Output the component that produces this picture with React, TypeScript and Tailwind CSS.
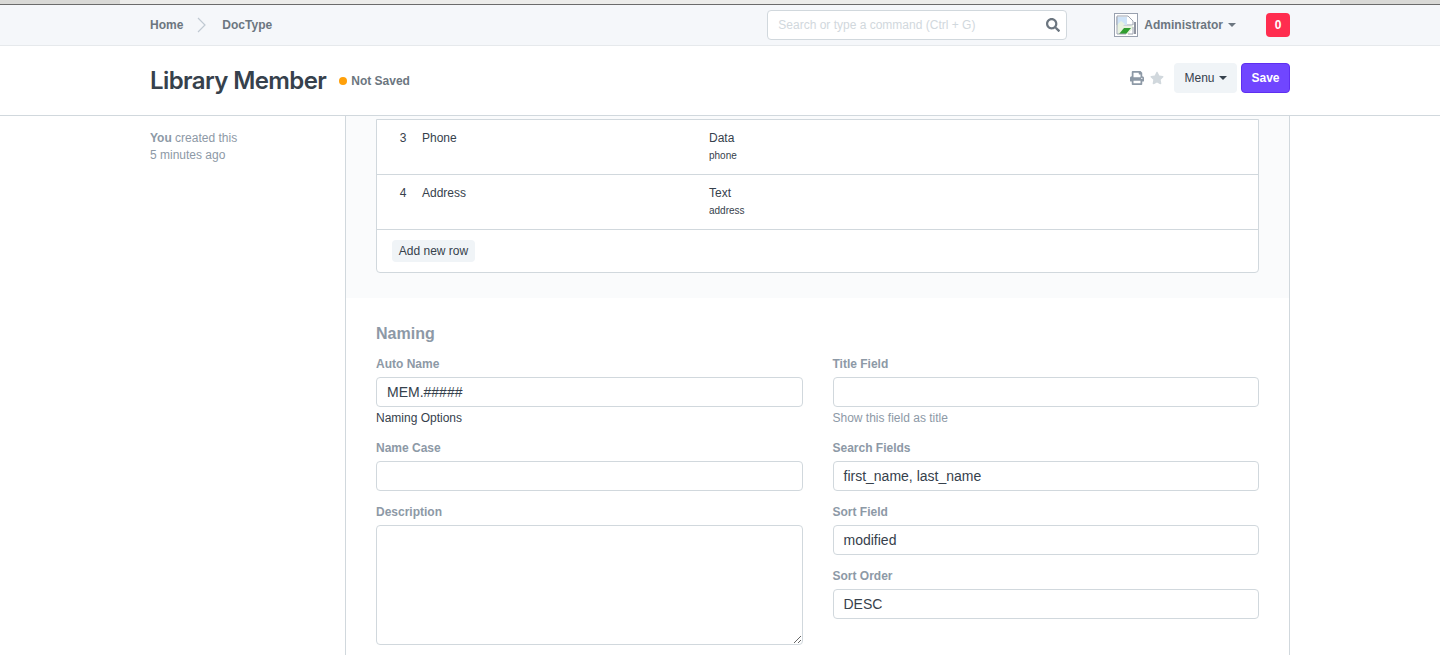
import { FaPrint, FaStar, FaSearch } from "react-icons/fa";

function Caret({ className }: { className: string }) {
  return (
    <svg viewBox="0 0 8 4" className={className} fill="currentColor">
      <path d="M0 0h8L4 4z" />
    </svg>
  );
}

function BrokenImage() {
  return (
    <div className="flex h-6 w-6 items-center justify-center overflow-hidden border border-gray-400 bg-white">
      <svg viewBox="0 0 22 22" className="h-5.5 w-5.5">
        <path d="M2 2h11l5 5v4H2z" fill="#fff" stroke="#9ca3af" strokeWidth="1" />
        <path d="M2 3h10v8H2z" fill="#cfe3f7" />
        <path d="M2 11l4-4 4 3-2 2 8 0 2-1v3l-5 6H3z" fill="#e8f2e0" />
        <path d="M4 20l5-6 7 0-5 6z" fill="#2f9e2f" />
        <path d="M2 20V3M2 20h9" fill="none" stroke="#9ca3af" strokeWidth="1" />
        <path d="M18 13v7h-5" fill="none" stroke="#9ca3af" strokeWidth="1" />
        <path d="M20 8v12" stroke="#6b7280" strokeWidth="1.5" />
      </svg>
    </div>
  );
}

function Row({ n, name, type, field }: { n: string; name: string; type: string; field: string }) {
  return (
    <div className="flex h-13.75 border-b border-[#d1d8dd] pt-2 pl-5 text-xs leading-5 text-[#36414c]">
      <div className="w-3 text-center">{n}</div>
      <div className="ml-3.25 w-71.75">{name}</div>
      <div>
        <div>{type}</div>
        <div className="text-[10px] leading-4">{field}</div>
      </div>
    </div>
  );
}

function Field({
  label,
  value,
  help,
  helpDark,
  tall,
}: {
  label: string;
  value?: string;
  help?: string;
  helpDark?: boolean;
  tall?: boolean;
}) {
  return (
    <div className="mb-3.25">
      <div className="mb-1.25 text-xs leading-4 font-bold text-[#8d99a6]">{label}</div>
      {tall ? (
        <textarea
          readOnly
          className="block h-30 w-full resize-y rounded border border-[#d1d8dd] bg-white px-2.5 text-sm outline-none"
        />
      ) : (
        <div className="h-7.5 rounded border border-[#d1d8dd] bg-white px-2.5 text-sm leading-7 text-[#36414c]">
          {value}
        </div>
      )}
      {help && (
        <div className={`h-5 pt-0.5 text-xs leading-4.5 ${helpDark ? "text-[#36414c]" : "text-[#8d99a6]"}`}>{help}</div>
      )}
    </div>
  );
}

export default function App() {
  return (
    <div
      className="h-screen overflow-hidden bg-white"
      style={{ fontFamily: '"Liberation Sans", Arial, sans-serif' }}
    >
      <div className="flex h-1 bg-[#d9d9d6]">
        <div className="w-30" />
        <div className="w-305 bg-[#ececea]" />
      </div>
      <div className="h-px bg-[#6b6b6b]" />
      <div className="h-10.25 border-b border-[#e6e9ec] bg-[#f5f7fa]">
        <div className="mx-auto flex h-10 w-285 items-center">
          <span className="text-xs font-bold text-[#6c7680]">Home</span>
          <svg viewBox="0 0 10 16" className="mr-3.75 ml-3.5 h-4 w-2.5 text-[#c0c9d2]" fill="none" stroke="currentColor" strokeWidth="1.2">
            <path d="M1 1l7 7-7 7" />
          </svg>
          <span className="text-xs font-bold text-[#6c7680]">DocType</span>
          <div className="ml-auto flex h-7.5 w-75 items-center justify-between rounded border border-[#d1d8dd] bg-white pr-1.5 pl-2.5 text-xs text-[#d1d8dd]">
            <span>Search or type a command (Ctrl + G)</span>
            <FaSearch className="h-3.5 w-3.5 text-[#6c7680]" />
          </div>
          <div className="ml-11.75">
            <BrokenImage />
          </div>
          <span className="ml-1.5 text-xs font-bold text-[#6c7680]">Administrator</span>
          <Caret className="ml-1.25 h-1 w-2 text-[#6c7680]" />
          <div className="ml-7.5 flex h-6 w-6 items-center justify-center rounded bg-[#ff2d4f] text-xs font-bold text-white">
            0
          </div>
        </div>
      </div>
      <div className="border-b border-[#d1d8dd]">
        <div className="mx-auto flex h-17.25 w-285 items-center">
          <h1 className="font-['Inter'] text-2xl font-semibold tracking-tight text-[#36414c]">Library Member</h1>
          <span className="ml-3.25 h-2 w-2 rounded-full bg-[#ffa00a]" />
          <span className="ml-1 text-xs font-bold text-[#6c7680]">Not Saved</span>
          <div className="-mt-1.5 ml-auto flex items-center">
            <FaPrint className="h-3.5 w-3.5 text-[#8d99a6]" />
            <FaStar className="ml-1.5 h-3.5 w-3.5 text-[#d1d8dd]" />
            <div className="ml-2.5 flex h-7.5 w-15.75 items-center justify-center rounded bg-[#f0f4f7] text-xs text-[#36414c]">
              Menu
              <Caret className="ml-1 h-1 w-2 text-[#36414c]" />
            </div>
            <div className="ml-1 flex h-7.5 w-12.25 items-center justify-center rounded border border-[#5e2ff0] bg-[#7046ff] text-xs font-bold text-white">
              Save
            </div>
          </div>
        </div>
      </div>
      <div className="mx-auto flex w-285">
        <div className="w-48.75 pt-3.5 text-xs leading-4.25 text-[#8d99a6]">
          <div>
            <span className="font-bold">You</span> created this
          </div>
          <div>5 minutes ago</div>
        </div>
        <div className="min-h-screen flex-1 border-x border-[#d1d8dd]">
          <div className="bg-[#fafbfc] px-7.5 pt-0.75 pb-6.25">
            <div className="rounded-b border border-[#d1d8dd] bg-white">
              <Row n="3" name="Phone" type="Data" field="phone" />
              <Row n="4" name="Address" type="Text" field="address" />
              <div className="h-10.5 px-3.75 pt-2.5">
                <div className="flex h-5.5 w-20.75 items-center justify-center rounded bg-[#f0f4f7] text-xs text-[#36414c]">
                  Add new row
                </div>
              </div>
            </div>
          </div>
          <div className="px-7.5 pt-6">
            <h2 className="mb-2.5 text-base leading-6 font-bold text-[#8d99a6]">Naming</h2>
            <div className="grid grid-cols-2 gap-x-7.5">
              <div>
                <Field label="Auto Name" value="MEM.#####" help="Naming Options" helpDark />
                <Field label="Name Case" />
                <Field label="Description" tall />
              </div>
              <div>
                <Field label="Title Field" help="Show this field as title" />
                <Field label="Search Fields" value="first_name, last_name" />
                <Field label="Sort Field" value="modified" />
                <Field label="Sort Order" value="DESC" />
              </div>
            </div>
          </div>
        </div>
      </div>
    </div>
  );
}
